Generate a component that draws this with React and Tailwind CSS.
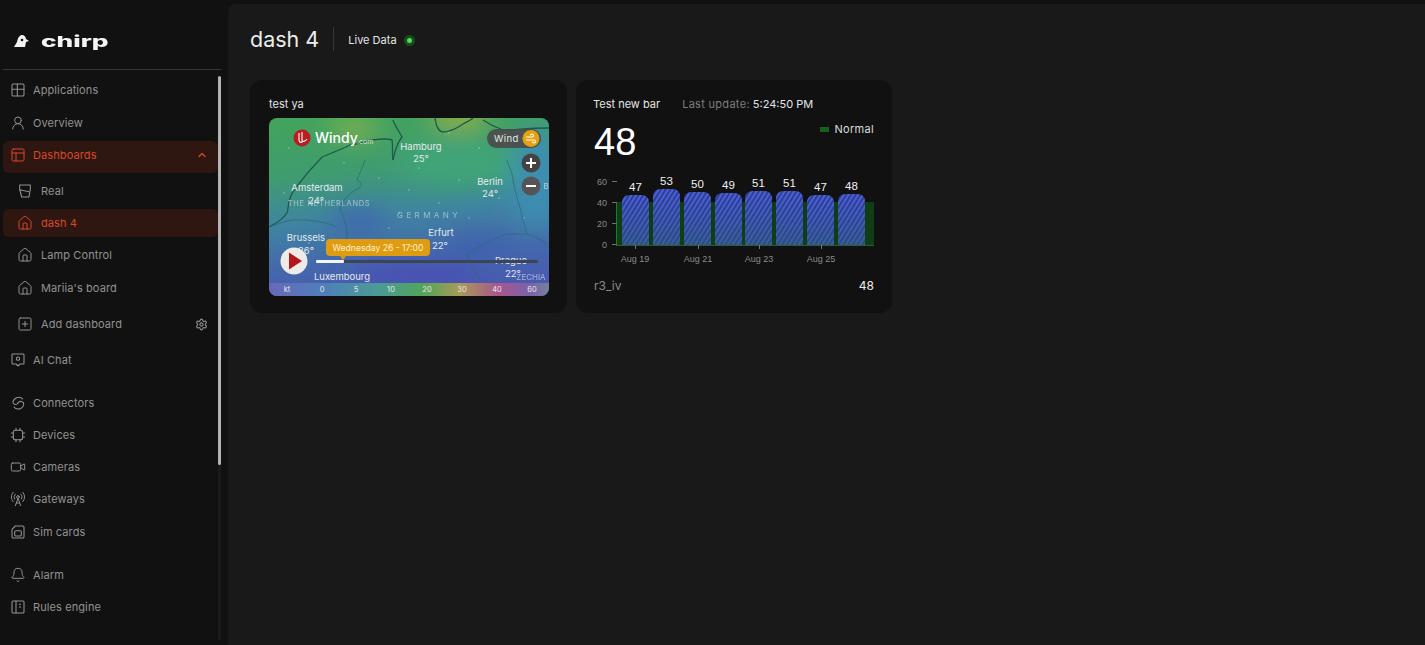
import * as React from 'react';
import { Bell, ChevronUp, House, PanelsTopLeft, RadioTower, Settings, SquarePlus, UserRound, Video } from 'lucide-react';

const Svg = ({ children, className = '' }) => (
  <svg width="16" height="16" viewBox="0 0 24 24" fill="none" stroke="currentColor" strokeWidth="1.6" strokeLinecap="round" strokeLinejoin="round" className={className}>
    {children}
  </svg>
);

const GridIcon = () => (
  <Svg>
    <rect x="3" y="3" width="18" height="18" rx="2" />
    <path d="M3 11h18M11 3v18" />
  </Svg>
);
const CupIcon = () => (
  <Svg>
    <path d="M4 3h16v6L18 21H7L4 9z" />
    <path d="M4 10l14 3" />
  </Svg>
);
const ChatIcon = () => (
  <Svg>
    <path d="M4 3h16a1 1 0 0 1 1 1v13a1 1 0 0 1-1 1h-5l-3 3-3-3H4a1 1 0 0 1-1-1V4a1 1 0 0 1 1-1z" />
    <circle cx="12" cy="10" r="2.5" />
  </Svg>
);
const LinkIcon = () => (
  <Svg>
    <path d="M19 6c-3-4-9-3-12 0-3 3-4 7 0 8 2 .5 4-.5 5-2" />
    <path d="M12 12c1-2 3-3 6-2 4 1 3 6 0 9-3 3-9 3-12-1" />
  </Svg>
);
const ChipIcon = () => (
  <Svg>
    <rect x="5" y="5" width="14" height="14" rx="3" />
    <path d="M9 2v3M15 2v3M9 19v3M15 19v3M2 9h3M2 15h3M19 9h3M19 15h3" />
  </Svg>
);
const SimIcon = () => (
  <Svg>
    <path d="M8 3h11a2 2 0 0 1 2 2v14a2 2 0 0 1-2 2H5a2 2 0 0 1-2-2V8z" />
    <rect x="7" y="10" width="10" height="8" rx="2" />
  </Svg>
);
const RulesIcon = () => (
  <Svg>
    <rect x="3" y="3" width="18" height="18" rx="1.5" />
    <path d="M9 3v18M14 8h2M14 12h2" />
  </Svg>
);

function Item({ icon: Icon, label, active, sub, mt = '', h = 'h-[32px]', right }) {
  return (
    <div
      className={`flex items-center rounded-md ${sub ? 'pl-[14px]' : 'pl-[7px]'} pr-[10px] ${mt} ${h} ${
        active ? 'bg-[#2e1710] text-[#d9472b]' : 'text-[#919191]'
      }`}
    >
      <span className="w-[23px] shrink-0 flex">
        <Icon size={16} strokeWidth={1.5} />
      </span>
      <span className={`text-[11px] tracking-[0.1px] ${sub ? 'ml-[1px]' : ''}`}>{label}</span>
      {right && <span className="ml-auto flex">{right}</span>}
    </div>
  );
}

function Sidebar() {
  return (
    <aside className="relative w-[228px] shrink-0 h-[645px] overflow-hidden bg-[#111111]">
      <div className="flex items-center h-[69px] pt-[13px] pl-[14px]">
        <svg width="16" height="14" viewBox="0 0 16 14">
          <path d="M0 13 3 8C4 3 6 1 8 1c2 0 4 2 4 4l3 2-3 1-1 5z" fill="#f2f2f2" />
          <circle cx="8" cy="6" r="1.3" fill="#111111" />
        </svg>
        <span className="ml-[11px] text-[#f4f4f4] text-[15px] font-extrabold leading-none origin-left scale-x-[1.75]">chirp</span>
      </div>
      <div className="h-[1px] mx-[3px] w-[218px] bg-[#363636]" />
      <nav className="pl-[3px] w-[218px] pt-[4px]">
        <Item icon={GridIcon} label="Applications" />
        <Item icon={UserRound} label="Overview" mt="mt-[1px]" />
        <Item icon={PanelsTopLeft} label="Dashboards" active mt="mt-[2px] pb-[4px]" right={<ChevronUp size={12} strokeWidth={2.5} />} />
        <Item icon={CupIcon} label="Real" sub mt="mt-[2px]" />
        <Item icon={House} label="dash 4" active sub mt="mt-[2px]" h="h-[28px]" />
        <Item icon={House} label="Lamp Control" sub mt="mt-[2px]" />
        <Item icon={House} label="Mariia's board" sub mt="mt-[1px]" />
        <Item icon={SquarePlus} label="Add dashboard" sub mt="mt-[4px]" right={<Settings size={13} />} />
        <Item icon={ChatIcon} label="AI Chat" mt="mt-[4px]" />
        <Item icon={LinkIcon} label="Connectors" mt="mt-[11px]" />
        <Item icon={ChipIcon} label="Devices" />
        <Item icon={Video} label="Cameras" />
        <Item icon={RadioTower} label="Gateways" />
        <Item icon={SimIcon} label="Sim cards" mt="mt-[1px]" />
        <Item icon={Bell} label="Alarm" mt="mt-[11px]" />
        <Item icon={RulesIcon} label="Rules engine" />
      </nav>
      <div className="absolute left-[218px] top-[76px] w-[3px] h-[389px] rounded-full bg-[#b5b5b5]" />
      <div className="absolute left-[218px] top-[465px] w-[3px] h-[175px] bg-[#1a1a1a]" />
    </aside>
  );
}

const mapLabel = { fill: '#e3ebee', fontSize: 9.5, textAnchor: 'middle', fontFamily: 'Inter, sans-serif' };

function WindyMap() {
  return (
    <div className="h-[178px] w-[280px] rounded-lg overflow-hidden">
      <svg width="280" height="178" viewBox="0 0 280 178" className="block">
        <defs>
          <linearGradient id="base" x1="0.25" y1="0" x2="0.4" y2="1">
            <stop offset="0" stopColor="#42a35c" />
            <stop offset="0.3" stopColor="#3f9c70" />
            <stop offset="0.55" stopColor="#3f85a0" />
            <stop offset="0.8" stopColor="#4468ac" />
            <stop offset="1" stopColor="#4a5ab0" />
          </linearGradient>
          <linearGradient id="legend" x1="0" y1="0" x2="1" y2="0">
            <stop offset="0" stopColor="#6a68b8" />
            <stop offset="0.2" stopColor="#4f80b8" />
            <stop offset="0.38" stopColor="#4a9a98" />
            <stop offset="0.55" stopColor="#52a55a" />
            <stop offset="0.68" stopColor="#a89a58" />
            <stop offset="0.82" stopColor="#a8568c" />
            <stop offset="0.93" stopColor="#7a62aa" />
            <stop offset="1" stopColor="#76809a" />
          </linearGradient>
          <filter id="blur" x="-30%" y="-30%" width="160%" height="160%">
            <feGaussianBlur stdDeviation="12" />
          </filter>
          <filter id="soft">
            <feGaussianBlur stdDeviation="0.35" />
          </filter>
        </defs>
        <rect width="280" height="178" fill="url(#base)" />
        <g filter="url(#blur)">
          <ellipse cx="85" cy="10" rx="26" ry="12" fill="#7fb050" />
          <ellipse cx="190" cy="-2" rx="30" ry="12" fill="#a0b040" />
          <ellipse cx="268" cy="60" rx="28" ry="50" fill="#3d8db2" />
          <ellipse cx="190" cy="45" rx="60" ry="22" fill="#3fa578" />
          <ellipse cx="90" cy="105" rx="30" ry="14" fill="#3f68ae" />
          <ellipse cx="210" cy="130" rx="36" ry="14" fill="#3f62ad" />
          <ellipse cx="150" cy="160" rx="70" ry="14" fill="#4a50b4" />
        </g>
        <g fill="none" stroke="#1f5a4c" strokeWidth="1.3" filter="url(#soft)">
          <path d="M0 109c8-4 14-8 18-14 2-6 0-14 8-24 6-8 12-16 18-22l9-10c10-4 20-8 28-12 12-2 22-6 33-6 4 0 7 0 9 1 1 6 0 14 1 20" />
          <path d="M124 42c2-8 3-16 9-23-3-6-7-11-9-17" />
          <path d="M166 0c1 6 2 12 7 14 8 0 14-3 21-8 4-2 8-4 10-6M214 2c6 4 14 8 20 10 10 0 24-2 46-2" />
        </g>
        <g fill="none" stroke="#2f6a72" strokeWidth="0.8" filter="url(#soft)">
          <path d="M96 42c-2 7-6 14-8 20 4 2 6 6 2 8-8 4-17 12-19 19 3 10 8 20 7 30-2 6-6 10-4 20" />
          <path d="M1 109c10-4 20-8 30-7 12 0 26 2 37 7" />
          <path d="M238 42c2 7 6 14 6 20 2 14 8 28 10 40l4 14c8 2 14 6 20 10" />
          <path d="M258 116h-20c-14 4-28 14-40 20 2 8 8 16 13 26" />
        </g>
        <g fill="#ffffff" opacity="0.4">
          {[[20,30],[60,70],[110,60],[150,50],[170,85],[210,30],[200,100],[130,95],[40,125],[255,100],[90,125],[180,15],[230,80],[15,75],[75,45],[140,72],[190,62],[120,110]].map(([x, y], i) => (
            <circle key={i} cx={x} cy={y} r="0.8" />
          ))}
        </g>
        <circle cx="33" cy="20" r="8.5" fill="#b91c22" />
        <path d="M30 15v7c0 3 3 3 4 1M33 14v8c0 2 3 2 5-1" fill="none" stroke="#fff" strokeWidth="1.1" />
        <text x="46" y="25" fill="#fff" fontSize="14" fontWeight="500" fontFamily="Inter, sans-serif">Windy</text>
        <text x="88" y="26" fill="#d7e6d8" fontSize="7" fontFamily="Inter, sans-serif">.com</text>

        <text x="152" y="32" {...mapLabel}>Hamburg</text>
        <text x="152" y="44" {...mapLabel}>25°</text>
        <text x="48" y="73" {...mapLabel}>Amsterdam</text>
        <text x="47" y="86" {...mapLabel}>24°</text>
        <text x="60" y="88" {...mapLabel} fontSize="7.5" letterSpacing="0.7" opacity="0.6">THE NETHERLANDS</text>
        <text x="221" y="67" {...mapLabel}>Berlin</text>
        <text x="221" y="79" {...mapLabel}>24°</text>
        <text x="160" y="100" {...mapLabel} fontSize="8" letterSpacing="3.4" opacity="0.55">GERMANY</text>
        <text x="172" y="118" {...mapLabel}>Erfurt</text>
        <text x="171" y="131" {...mapLabel}>22°</text>
        <text x="37" y="123" {...mapLabel}>Brussels</text>
        <text x="37" y="136" {...mapLabel}>26°</text>
        <text x="73" y="162" {...mapLabel}>Luxembourg</text>
        <text x="242" y="146" {...mapLabel}>Prague</text>
        <text x="244" y="159" {...mapLabel}>22°</text>
        <text x="262" y="162" {...mapLabel} fontSize="8" opacity="0.6">ZECHIA</text>
        <text x="277" y="71" {...mapLabel} fontSize="8" opacity="0.7">B</text>

        <rect x="218" y="11" width="54" height="19" rx="9.5" fill="#4a4a4a" fillOpacity="0.9" />
        <text x="225" y="24" fill="#e8e8e8" fontSize="9.5" letterSpacing="0.4" fontFamily="Inter, sans-serif">Wind</text>
        <circle cx="262" cy="20.5" r="8.5" fill="#e5a10f" />
        <path d="M257 19h6a1.5 1.5 0 1 0-1.5-1.5M257 22h8a1.5 1.5 0 1 1-1.5 1.5" fill="none" stroke="#fff" strokeWidth="1.1" />
        <circle cx="262" cy="45" r="9.5" fill="#444" />
        <path d="M257 45h10M262 40v10" stroke="#fff" strokeWidth="2" />
        <circle cx="262" cy="68" r="9.5" fill="#555" />
        <path d="M257 68h10" stroke="#fff" strokeWidth="2" />

        <rect x="47" y="142" width="222" height="3" rx="1.5" fill="#3d4555" />
        <rect x="47" y="142" width="28" height="3" rx="1" fill="#f5f5f5" />
        <path d="M71 138h6l-3 4z" fill="#d99a12" />
        <rect x="57" y="121" width="104" height="17" rx="4" fill="#e09c10" />
        <text x="109" y="132.5" fill="#fff3d0" fontSize="8.6" textAnchor="middle" fontFamily="Inter, sans-serif">Wednesday 26 - 17:00</text>
        <circle cx="25" cy="143" r="13.5" fill="#ecebe8" />
        <path d="M20 134.5 33 143l-13 8.5z" fill="#b3161c" />

        <rect y="165" width="280" height="13" fill="url(#legend)" />
        {[['kt', 18], ['0', 53], ['5', 87], ['10', 122], ['20', 158], ['30', 193], ['40', 228], ['60', 263]].map(([t, x]) => (
          <text key={t} x={x} y="174" fill="#e6e6ee" fontSize="7.5" textAnchor="middle" fontFamily="Inter, sans-serif">{t}</text>
        ))}
      </svg>
    </div>
  );
}

const bars = [
  [622, 195, 47], [653, 189, 53], [684, 192, 50], [715, 193, 49],
  [745, 191, 51], [776, 191, 51], [807, 195, 47], [838, 194, 48],
];
const chartText = { fontFamily: '"Liberation Sans", Arial, sans-serif' };

function BarChart() {
  return (
    <svg width="295" height="95" viewBox="590 175 295 95" className="block -ml-[4px] mt-[10px]">
      <defs>
        <pattern id="hatch" width="4" height="4" patternUnits="userSpaceOnUse" patternTransform="rotate(32)">
          <rect width="4" height="4" fill="#4c60dc" />
          <rect width="1.8" height="4" fill="#2b3a8e" />
        </pattern>
        <linearGradient id="fade" x1="0" y1="0" x2="0" y2="1">
          <stop offset="0" stopColor="#2a4a7a" stopOpacity="0" />
          <stop offset="1" stopColor="#2a5a6a" stopOpacity="0.55" />
        </linearGradient>
      </defs>
      <rect x="616" y="202" width="258" height="43" fill="#0e3d16" />
      <path d="M616.5 202v43" stroke="#1f7a2c" strokeWidth="1" />
      {[['60', 182], ['40', 203], ['20', 224], ['0', 245]].map(([t, y]) => (
        <g key={t}>
          <text x="607" y={y + 3} fill="#8a8a8a" fontSize="9" textAnchor="end" {...chartText}>{t}</text>
          <path d={`M612 ${y - 0.5}h5`} stroke="#6f6f6f" />
        </g>
      ))}
      <path d="M616 245.5h258" stroke="#2c5a32" />
      {bars.map(([x, top, v]) => {
        const d = `M${x} 245V${top + 8}q0-8 8-8h11q8 0 8 8V245z`;
        return (
          <g key={x}>
            <path d={d} fill="url(#hatch)" />
            <path d={d} fill="url(#fade)" />
            <text x={x + 13.5} y={top - 4} fill="#f0f0f0" fontSize="11.5" textAnchor="middle" {...chartText}>{v}</text>
          </g>
        );
      })}
      {[['Aug 19', 635], ['Aug 21', 698], ['Aug 23', 759], ['Aug 25', 821]].map(([t, x]) => (
        <g key={t}>
          <path d={`M${x + 0.5} 245v4`} stroke="#777" />
          <text x={x} y="262" fill="#8a8a8a" fontSize="9" textAnchor="middle" {...chartText}>{t}</text>
        </g>
      ))}
    </svg>
  );
}

export default function App() {
  return (
    <div className="flex h-[645px] w-[1425px] overflow-hidden bg-[#111111] font-['Inter',sans-serif]">
      <Sidebar />
      <main className="flex-1 mt-[4px] rounded-tl-lg bg-[#191919] pl-[22px]">
        <header className="flex items-center h-[71px] pb-[1px]">
          <h1 className="mt-[2px] text-[21.5px] font-normal text-[#ececec] leading-none">dash 4</h1>
          <div className="ml-[14px] w-[1px] h-[24px] bg-[#363636]" />
          <span className="ml-[14px] mt-[2px] text-[11px] text-[#e4e4e4]">Live Data</span>
          <span className="ml-[7px] mt-[2px] w-[11px] h-[11px] rounded-full bg-[#134f1c] flex items-center justify-center">
            <span className="w-[5px] h-[5px] rounded-full bg-[#5fd45f]" />
          </span>
        </header>
        <div className="flex gap-[9px] mt-[5px]">
          <section className="w-[317px] h-[233px] rounded-xl bg-[#111111] pl-[19px] pt-[17px]">
            <div className="text-[11px] text-[#e4e4e4] leading-[14px] mb-[7px]">test ya</div>
            <WindyMap />
          </section>
          <section className="relative w-[316px] h-[233px] rounded-xl bg-[#111111] px-[18px] pt-[17px]">
            <div className="flex -ml-[1px] text-[11px] leading-[14px]">
              <span className="text-[#e4e4e4]">Test new bar</span>
              <span className="ml-[22px] text-[#7d7d7d] tracking-[0.3px]">Last update:</span>
              <span className="ml-[3px] text-[#e4e4e4]">5:24:50 PM</span>
            </div>
            <div className="flex justify-between mt-[8px] h-[46px]">
              <span className="text-[38px] leading-[46px] text-white font-['Liberation_Sans',sans-serif]">48</span>
              <span className="flex items-center h-[13px] mt-[4px] text-[11px] tracking-[0.3px] text-[#dcdcdc]">
                <span className="w-[9px] h-[5px] bg-[#14601f] mr-[6px]" />
                Normal
              </span>
            </div>
            <BarChart />
            <div className="flex justify-between items-center mt-[7px] text-[12px]">
              <span className="text-[#8a8a8a]">r3_iv</span>
              <span className="text-[#ececec]">48</span>
            </div>
          </section>
        </div>
      </main>
    </div>
  );
}
